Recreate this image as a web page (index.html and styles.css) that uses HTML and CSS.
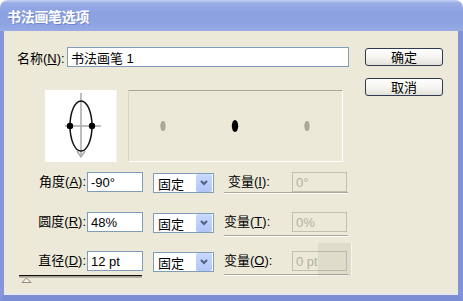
FILE: index.html
```html
<!DOCTYPE html>
<html lang="zh">
  <head>
    <meta charset="UTF-8" />
    <title>书法画笔选项</title>
    <link rel="stylesheet" href="styles.css">
  </head>
  <body>
    <div class="window">
      <div class="titlebar">
        <span class="title">书法画笔选项</span>
      </div>
      <div class="frame">
        <div class="left">
          <div class="name-row">
            <label class="name-label">名称(<u>N</u>):</label>
            <input class="field name-field" type="text" value="书法画笔 1" />
          </div>

          <div class="preview-row">
            <div class="tip-box">
              <svg width="72" height="72" viewBox="0 0 72 72">
                <line x1="36" y1="3" x2="36" y2="67" stroke="#a9a9a9" stroke-width="1.5" />
                <polyline points="32,61 36,67 40,61" fill="none" stroke="#a9a9a9" stroke-width="1.5" />
                <line x1="20" y1="36" x2="56" y2="36" stroke="#a9a9a9" stroke-width="1.5" />
                <ellipse cx="36" cy="36" rx="11" ry="25" fill="none" stroke="#111" stroke-width="1.5" />
                <circle cx="25" cy="36" r="3.2" fill="#000" />
                <circle cx="47" cy="36" r="3.2" fill="#000" />
              </svg>
            </div>
            <div class="stroke-pane">
              <svg width="213" height="70" viewBox="0 0 213 70">
                <ellipse cx="34" cy="35" rx="2.6" ry="5" fill="#a8a798" />
                <ellipse cx="106" cy="35" rx="3.2" ry="6" fill="#000" />
                <ellipse cx="178" cy="35" rx="2.6" ry="5" fill="#a8a798" />
              </svg>
            </div>
          </div>

          <div class="param-row">
            <span class="param-label">角度(<u>A</u>):</span>
            <input class="field value" type="text" value="-90°" />
            <div class="combo">
              <span class="combo-text">固定</span>
              <span class="combo-btn">
                <svg width="8" height="6" viewBox="0 0 8 6"><polyline points="1,1 4,4 7,1" fill="none" stroke="#4d6185" stroke-width="2" /></svg>
              </span>
            </div>
            <div class="variance first">
              <span class="var-label">变量(<u>I</u>):</span>
              <input class="field disabled" type="text" value="0°" disabled />
            </div>
          </div>

          <div class="param-row">
            <span class="param-label">圆度(<u>R</u>):</span>
            <input class="field value" type="text" value="48%" />
            <div class="combo">
              <span class="combo-text">固定</span>
              <span class="combo-btn">
                <svg width="8" height="6" viewBox="0 0 8 6"><polyline points="1,1 4,4 7,1" fill="none" stroke="#4d6185" stroke-width="2" /></svg>
              </span>
            </div>
            <div class="variance">
              <span class="var-label">变量(<u>T</u>):</span>
              <input class="field disabled" type="text" value="0%" disabled />
            </div>
          </div>

          <div class="param-row last">
            <span class="param-label">直径(<u>D</u>):</span>
            <input class="field value" type="text" value="12 pt" />
            <div class="combo">
              <span class="combo-text">固定</span>
              <span class="combo-btn">
                <svg width="8" height="6" viewBox="0 0 8 6"><polyline points="1,1 4,4 7,1" fill="none" stroke="#4d6185" stroke-width="2" /></svg>
              </span>
            </div>
            <div class="variance">
              <span class="var-label">变量(<u>O</u>):</span>
              <input class="field disabled" type="text" value="0 pt" disabled />
              <div class="ghost"></div>
            </div>
            <!-- diameter slider popup -->
            <div class="slider">
              <svg width="124" height="9" viewBox="0 0 124 9">
                <line x1="0" y1="0.5" x2="123" y2="0.5" stroke="#111" stroke-width="1.5" />
                <line x1="0" y1="2" x2="123" y2="2" stroke="#8a897f" stroke-width="1" />
                <polygon points="3,7.5 7.5,3 12,7.5" fill="#f4f3ee" stroke="#8a897f" stroke-width="1" />
              </svg>
            </div>
          </div>
        </div>

        <div class="buttons">
          <button class="btn">确定</button>
          <button class="btn">取消</button>
        </div>
      </div>
    </div>
  </body>
</html>
```

FILE: styles.css
```css
* {
  margin: 0;
  padding: 0;
  box-sizing: border-box;
}

body {
  background: #fff;
  font-family: "Liberation Sans", "Noto Sans CJK SC", sans-serif;
  font-size: 13px;
  color: #000;
}

.window {
  width: 463px;
  height: 301px;
  display: flex;
  flex-direction: column;
}

.titlebar {
  height: 31px;
  border-radius: 8px 8px 0 0;
  background: linear-gradient(180deg, #c6d1f3 0, #9aade7 3px, #8ca1e1 12px, #8ea3e2 24px, #98abe5 31px);
  display: flex;
  align-items: center;
  padding: 1px 0 0 7px;
}

.title {
  color: #fff;
  font-family: "Noto Sans CJK SC", sans-serif;
  font-weight: bold;
  font-size: 14px;
  letter-spacing: -0.3px;
  text-shadow: 1px 1px 0 rgba(60, 80, 150, 0.35);
}

.frame {
  flex: 1;
  display: flex;
  background: #ece9d8;
  border-left: 4px solid #8696d9;
  border-right: 5px solid #8193d7;
  border-bottom: 6px solid #7b8dd4;
  box-shadow: inset 0 -2px 0 #e6e8f5;
  padding: 16px 0 0 13px;
}

.left {
  width: 332px;
  display: flex;
  flex-direction: column;
}

.field {
  height: 20px;
  border: 1px solid #7f9db9;
  background: #fff;
  padding: 0 3px;
  font-family: "Liberation Sans", "Noto Sans CJK SC", sans-serif;
  font-size: 13px;
  color: #000;
  outline: none;
}

.name-row {
  display: flex;
  align-items: center;
}

.name-label {
  width: 50px;
}

.name-field {
  width: 282px;
}

.preview-row {
  display: flex;
  margin-top: 23px;
}

.tip-box {
  margin-left: 28px;
  width: 72px;
  height: 72px;
  background: #fff;
  border-right: 1px solid #f4f3ee;
}

.tip-box svg {
  display: block;
}

.stroke-pane {
  margin-left: 11px;
  width: 215px;
  height: 72px;
  border-top: 1px solid #aca899;
  border-left: 1px solid #d8d5c8;
  border-right: 1px solid #fff;
  border-bottom: 1px solid #fff;
}

.stroke-pane svg {
  display: block;
}

.param-row {
  position: relative;
  display: flex;
  align-items: flex-start;
  height: 20px;
  margin-top: 20px;
}

.param-row:nth-child(3) {
  margin-top: 10px;
}

.param-row.last {
  margin-top: 19px;
}

.param-label {
  width: 70px;
  line-height: 20px;
  text-align: right;
  padding-right: 1px;
}

.value {
  width: 56px;
}

.combo {
  margin: 1px 0 0 10px;
  width: 61px;
  height: 20px;
  border: 1px solid #7f9db9;
  background: #fff;
  display: flex;
  align-items: center;
  justify-content: space-between;
}

.combo-text {
  padding-left: 4px;
  font-family: "Noto Sans CJK SC", sans-serif;
}

.combo-btn {
  width: 16px;
  height: 18px;
  margin-right: 1px;
  border-radius: 2px;
  background: linear-gradient(180deg, #cad8fc, #b1c5f6);
  display: flex;
  align-items: center;
  justify-content: center;
}

.variance {
  position: relative;
  margin-left: 10px;
  width: 124px;
  display: flex;
  align-items: flex-start;
  justify-content: space-between;
  padding-bottom: 2px;
  border-bottom: 1px solid #aca899;
  box-shadow: 0 1px 0 #fff;
  margin-bottom: -3px;
}

.variance.first {
  padding-left: 4px;
  padding-bottom: 0;
  margin-bottom: -1px;
}

.param-row:nth-child(4) .variance,
.param-row.last .variance {
  padding-bottom: 3px;
  margin-bottom: -4px;
}

.var-label {
  line-height: 20px;
}

.disabled {
  width: 55px;
  margin-right: 1px;
  border-color: #c2c0b2;
  background: #ece9d8;
  color: #b2b0a4;
}

.ghost {
  position: absolute;
  left: 94px;
  top: -8px;
  width: 34px;
  height: 33px;
  background: rgba(120, 112, 90, 0.1);
  border-right: 1px solid rgba(255, 255, 255, 0.7);
}

.slider {
  position: absolute;
  left: 2px;
  top: 24px;
  height: 9px;
}

.slider svg {
  display: block;
}

.buttons {
  margin: 1px 0 0 16px;
  width: 78px;
  display: flex;
  flex-direction: column;
  gap: 12px;
}

.btn {
  height: 18px;
  border: 1px solid #2f3a52;
  border-radius: 3px;
  background: linear-gradient(180deg, #ffffff 0, #f6f5f0 50%, #e3e2da 100%);
  font-family: "Noto Sans CJK SC", sans-serif;
  font-size: 13px;
  line-height: 16px;
  color: #000;
}
```
